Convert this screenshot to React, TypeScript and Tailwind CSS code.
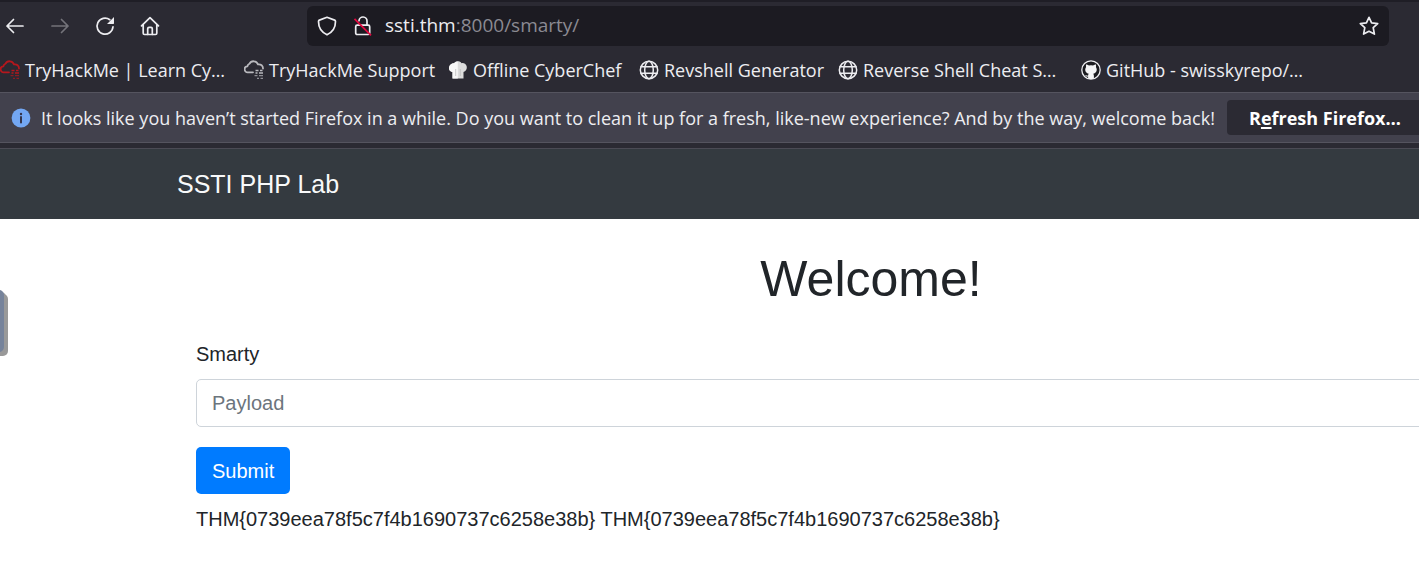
import type { ReactNode } from "react";

const line = {
  fill: "none",
  stroke: "currentColor",
  strokeWidth: 1.7,
  strokeLinecap: "round" as const,
  strokeLinejoin: "round" as const,
};

function Icon({ children, className = "" }: { children: ReactNode; className?: string }) {
  return (
    <svg viewBox="0 0 20 20" aria-hidden="true" className={"size-5 shrink-0 " + className}>
      {children}
    </svg>
  );
}

const BackIcon = () => (
  <Icon>
    <path d="M18 10H2M8.500 3.500 2 10l6.500 6.500" {...line} />
  </Icon>
);

const ForwardIcon = () => (
  <Icon>
    <path d="M2 10h16M11.500 3.500 18 10l-6.500 6.500" {...line} />
  </Icon>
);

const ReloadIcon = () => (
  <Icon>
    <path d="M14.800 3.700A8 8 0 1 0 18 10.800" {...line} />
    <path d="M19 1v6.300a.6.6 0 0 1-.6.600H12z" fill="currentColor" />
  </Icon>
);

const HomeIcon = () => (
  <Icon>
    <path d="M1.500 9.800 10 1.700l8.500 8.100M3.200 8.600v8.600a1.300 1.300 0 0 0 1.300 1.300h11a1.300 1.300 0 0 0 1.300-1.300V8.600" {...line} />
    <path d="M7.700 18.300v-5.600a1.300 1.300 0 0 1 1.300-1.300h2a1.300 1.300 0 0 1 1.300 1.300v5.600" {...line} />
  </Icon>
);

const ShieldIcon = () => (
  <Icon>
    <path d="m10 1.300 7.600 2.800q.9.400.9 1.400c0 5.500-2 10.200-8.500 13.300C3.500 15.700 1.500 11 1.500 5.500q0-1 .9-1.400z" {...line} />
  </Icon>
);

const InsecureIcon = () => (
  <Icon>
    <rect x="2.700" y="9.200" width="14" height="9.300" rx="1.500" {...line} />
    <path d="M6 4.800a4 4 0 0 1 8 .4v4" {...line} />
    <path d="m1.500 2.800 16.500 16.500" stroke="#e2093f" strokeWidth="1.700" />
  </Icon>
);

const StarIcon = () => (
  <Icon>
    <path d="m10 1.300 2.600 5.600 6.100.7-4.500 4.100 1.200 6.400L10 15.300l-5.400 2.800 1.200-6.400-4.500-4.100 6.100-.7z" {...line} />
  </Icon>
);

const CloudIcon = ({ className }: { className: string }) => (
  <Icon className={className}>
    <path d="M9 12.300H3.800a3 3 0 0 1-.4-6 3.500 3.500 0 0 1 2-2.500 4.700 4.700 0 0 1 8.600.6c3-.3 5 1.300 5 4.100" {...line} strokeWidth={1.800} />
    <path d="M11.500 10.500h3m1.500 0h2.500M11.500 13h2m1.500 0h4" stroke="currentColor" strokeWidth="1.500" />
    <path d="M10.500 15.700h3m1.500 0h4M13 18.300h2m1.500 0H19" stroke="currentColor" strokeWidth="1.300" opacity=".7" />
  </Icon>
);

const ChefIcon = () => (
  <Icon>
    <path d="M4.500 18.500V12C1.500 11.500.5 9 1.200 6.700 2 4.200 4.200 3 6.200 3.300 7.500.8 12 .6 13.500 3.200c2.300-.6 4.900 1 5.300 3.600.3 2.500-1 4.700-3.300 5.200v6.500z" fill="#dcdcdc" />
    <path d="M4.500 18.500V12C1.500 11.500.5 9 1.200 6.700 2 4.200 4.200 3 6.200 3.300 7 2 8.500 1.400 9.800 1.400v17.100z" fill="#f7f7f7" />
    <path d="M7.700 9v7M12.300 9v7" stroke="#bdbdbd" strokeWidth=".8" />
  </Icon>
);

const GlobeIcon = () => (
  <Icon>
    <g {...line} strokeWidth={1.500}>
      <circle cx="10" cy="10" r="8.700" />
      <ellipse cx="10" cy="10" rx="4.300" ry="8.700" />
      <path d="M2 6.800h16M2 13.200h16" />
    </g>
  </Icon>
);

const GithubIcon = () => (
  <Icon>
    <circle cx="10" cy="10" r="9.200" fill="#1b1b20" stroke="currentColor" strokeWidth="1.300" />
    <path d="M5.300 4.300 8 5.600q2-.5 4 0l2.700-1.300c.5 1 .5 1.900.2 2.700 2 3 .3 6.200-2.700 6.700.6.700.7 1.500.7 2.300v2.500q-2.900 1-5.800 0v-1.900c-1.500.3-2.300-.2-2.900-1.500 1 .2 1.500.8 2.900.5 0-.8.200-1.400.7-1.900C4.800 13.200 3.100 10 5.100 7c-.3-.8-.3-1.700.2-2.700z" fill="#f4f4f6" />
  </Icon>
);

const InfoIcon = () => (
  <Icon>
    <circle cx="10" cy="10" r="9.400" fill="#73a7f3" />
    <circle cx="10" cy="6" r="1.200" fill="#34344a" />
    <path d="M10 9v5.600" stroke="#34344a" strokeWidth="2" strokeLinecap="round" />
  </Icon>
);

const bookmarks = [
  { label: "TryHackMe | Learn Cy…", icon: <CloudIcon className="text-[#b5171d]" />, width: "w-[228px]" },
  { label: "TryHackMe Support", icon: <CloudIcon className="text-[#b9b9be]" />, width: "w-[188px]" },
  { label: "Offline CyberChef", icon: <ChefIcon />, width: "w-[175px]" },
  { label: "Revshell Generator", icon: <GlobeIcon />, width: "w-[183px]" },
  { label: "Reverse Shell Cheat S…", icon: <GlobeIcon />, width: "w-[227px]" },
  { label: "GitHub - swisskyrepo/…", icon: <GithubIcon />, width: "w-[227px]" },
];

function BrowserChrome() {
  return (
    <header className="bg-[#2b2a33] font-['Open_Sans',sans-serif] text-[#ededf1]">
      <div className="flex h-[47px] items-center border-t-2 border-[#1f1e26] pt-1.5 pr-[30px] pb-1">
        <nav aria-label="Navigation" className="flex w-[307px] shrink-0 items-center gap-[25px] pl-[5px]">
          <button type="button" aria-label="Back"><BackIcon /></button>
          <button type="button" aria-label="Forward" disabled className="text-[#74737a]"><ForwardIcon /></button>
          <button type="button" aria-label="Reload"><ReloadIcon /></button>
          <button type="button" aria-label="Home"><HomeIcon /></button>
        </nav>
        <div className="flex h-10 min-w-0 flex-1 items-center rounded-md bg-[#1c1b22] px-[10px]">
          <ShieldIcon />
          <span className="ml-4 flex"><InsecureIcon /></span>
          <div className="ml-3 flex-1 truncate text-[19px]">
            ssti.thm<span className="text-[#8b8a92]">:8000/smarty/</span>
          </div>
          <button type="button" aria-label="Bookmark this page"><StarIcon /></button>
        </div>
      </div>

      <nav aria-label="Bookmarks" className="flex h-[45px] items-center gap-4 overflow-hidden text-lg">
        {bookmarks.map((b) => (
          <a key={b.label} href="#" className={"flex shrink-0 items-center gap-[5px] whitespace-nowrap " + b.width}>
            {b.icon}
            <span>{b.label}</span>
          </a>
        ))}
      </nav>

      <div className="flex h-[51px] items-center overflow-hidden border-y border-[#55545f] bg-[#42414d] pl-[11px] text-lg">
        <InfoIcon />
        <p className="ml-[10px] w-[1186px] shrink-0 whitespace-nowrap">
          It looks like you haven’t started Firefox in a while. Do you want to clean it up for a fresh, like-new experience? And by the way, welcome back!
        </p>
        <button type="button" className="h-[35px] w-[196px] shrink-0 rounded bg-[#2b2a33] text-center font-bold whitespace-nowrap text-white">
          R<span className="underline decoration-2 underline-offset-2">e</span>fresh Firefox…
        </button>
      </div>
      <div className="h-[6px] border-b border-[#4b4b55]" />
    </header>
  );
}

export default function App() {
  return (
    <div className="relative min-h-screen overflow-hidden bg-white font-['Liberation_Sans',Arial,sans-serif] text-xl text-[#212529]">
      <BrowserChrome />
      <nav aria-label="Site" className="flex h-[70px] items-center bg-[#343a40] pl-[177px]">
        <a href="#" className="text-[25px] text-[#f8f9fa]">SSTI PHP Lab</a>
      </nav>
      <button
        type="button"
        aria-label="Open side panel"
        className="absolute top-[290px] -left-4 h-[62px] w-5 rounded-r-[5px] bg-[#76839b] shadow-[2px_2px_0_#999,4px_4px_0_#999]"
      />
      <main className="-mr-[127px] ml-[196px] pt-[30px]">
        <h1 className="text-center text-[50px] leading-[60px]">Welcome!</h1>
        <form className="mt-[30px]" onSubmit={(e) => e.preventDefault()}>
          <label htmlFor="payload" className="block leading-[30px]">Smarty</label>
          <input
            id="payload"
            type="text"
            placeholder="Payload"
            className="mt-[10px] block h-12 w-full rounded-[5px] border border-[#ced4da] px-[15px] placeholder:text-[#6c757d]"
          />
          <button type="submit" className="mt-5 block h-[47px] rounded-[5px] bg-[#007bff] px-4 text-white">
            Submit
          </button>
        </form>
        <p className="mt-[10px] leading-[30px]">
          THM&#123;0739eea78f5c7f4b1690737c6258e38b&#125; THM&#123;0739eea78f5c7f4b1690737c6258e38b&#125;
        </p>
      </main>
    </div>
  );
}
